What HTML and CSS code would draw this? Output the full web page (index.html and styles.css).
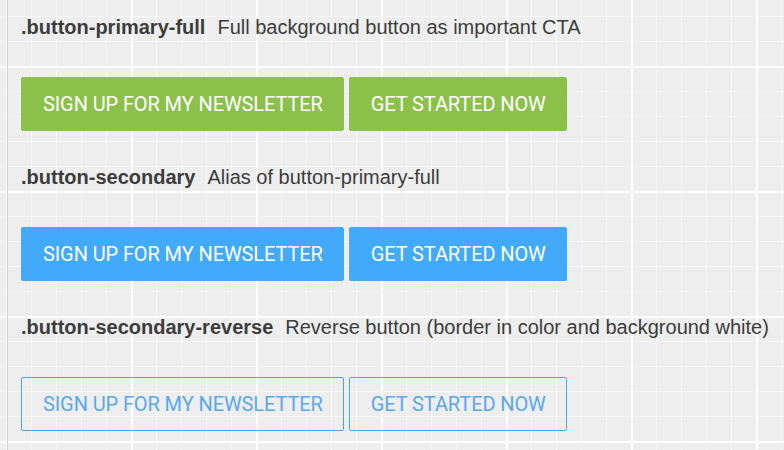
FILE: index.html
```html
<!DOCTYPE html>
<html lang="en">
<head>
<meta charset="utf-8">
<title>Buttons</title>
<link rel="stylesheet" href="styles.css">
</head>
<body>
<main class="page">
  <section class="demo">
    <p class="demo-title"><span class="demo-name">.button-primary-full</span>Full background button as important CTA</p>
    <div class="demo-buttons">
      <a class="btn btn-primary-full">Sign up for my newsletter</a>
      <a class="btn btn-primary-full">Get started now</a>
    </div>
  </section>
  <section class="demo">
    <p class="demo-title"><span class="demo-name">.button-secondary</span>Alias of button-primary-full</p>
    <div class="demo-buttons">
      <a class="btn btn-secondary">Sign up for my newsletter</a>
      <a class="btn btn-secondary">Get started now</a>
    </div>
  </section>
  <section class="demo">
    <p class="demo-title"><span class="demo-name">.button-secondary-reverse</span>Reverse button (border in color and background white)</p>
    <div class="demo-buttons">
      <a class="btn btn-secondary-reverse">Sign up for my newsletter</a>
      <a class="btn btn-secondary-reverse">Get started now</a>
    </div>
  </section>
</main>
</body>
</html>
```

FILE: styles.css
```css
html, body {
  margin: 0;
  padding: 0;
}
body {
  height: 450px;
  overflow: hidden;
  background-color: #eeeeee;
  background-image:
    linear-gradient(#ffffff 2px, transparent 2px),
    linear-gradient(90deg, #ffffff 2px, transparent 2px),
    linear-gradient(rgba(255,255,255,0.45) 1px, transparent 1px),
    linear-gradient(90deg, rgba(255,255,255,0.45) 1px, transparent 1px);
  background-size: 125px 125px, 125px 125px, 25px 25px, 25px 25px;
  background-position: 0 66px, 131px 0, 0 16px, 6px 0;
  font-family: Arial, "Liberation Sans", sans-serif;
  color: #3c3c3c;
}
.page {
  margin-left: 7px;
  border-left: 1px solid #d2d2d2;
  padding-left: 13px;
  min-height: 450px;
  box-sizing: border-box;
}
.demo {
  padding-top: 14px;
  padding-bottom: 19px;
}
.demo-title {
  margin: 0 0 37px;
  font-size: 20px;
  line-height: 26px;
  white-space: nowrap;
}
.demo-name {
  font-weight: bold;
  margin-right: 12px;
}
.demo-buttons {
  display: flex;
  gap: 5px;
}
.btn {
  display: block;
  box-sizing: border-box;
  height: 54px;
  padding: 0 20px 0 21px;
  border-radius: 2px;
  font-family: Roboto, "Liberation Sans", sans-serif;
  font-size: 20px;
  line-height: 52px;
  letter-spacing: -0.1px;
  text-transform: uppercase;
  color: #ffffff;
  border: 1px solid transparent;
  white-space: nowrap;
}
.btn-primary-full {
  background: #8bc14a;
  border-color: #8bc14a;
}
.btn-secondary {
  background: #42aaf8;
  border-color: #42aaf8;
}
.btn-secondary-reverse {
  background: transparent;
  border-color: #4ba3ee;
  color: #5aa8ef;
}
```
